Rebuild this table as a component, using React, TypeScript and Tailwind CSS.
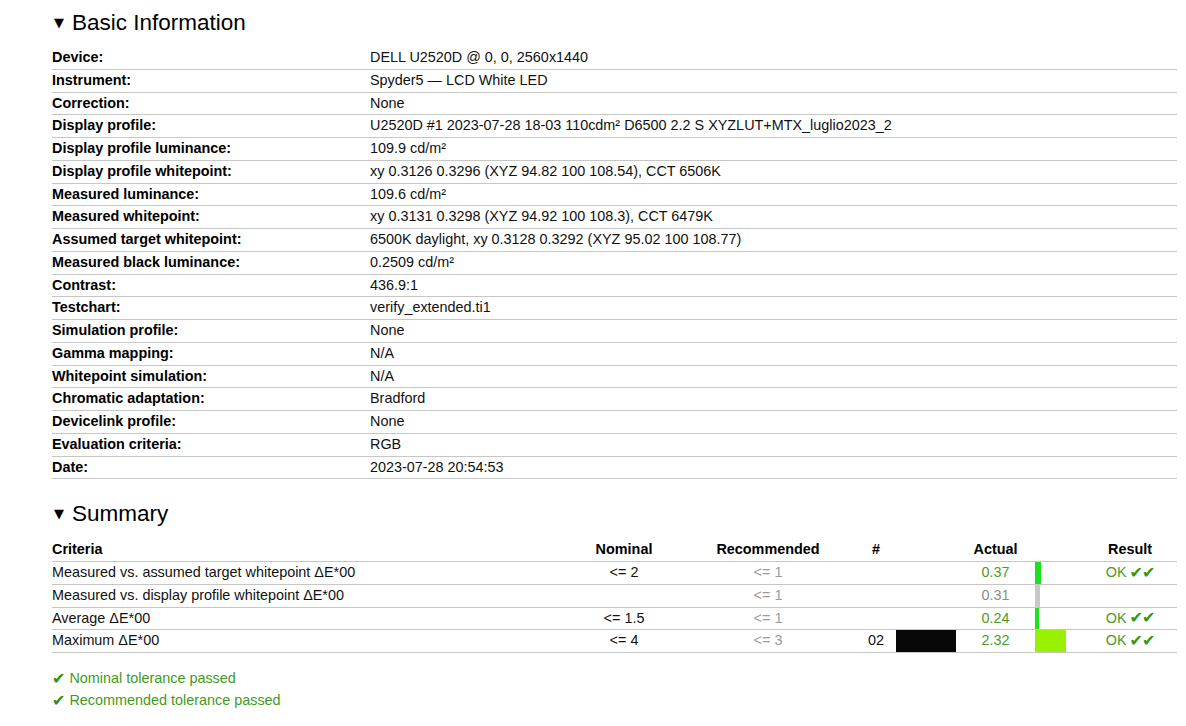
const basicInfo: [string, string][] = [
  ["Device:", "DELL U2520D @ 0, 0, 2560x1440"],
  ["Instrument:", "Spyder5 — LCD White LED"],
  ["Correction:", "None"],
  ["Display profile:", "U2520D #1 2023-07-28 18-03 110cdm² D6500 2.2 S XYZLUT+MTX_luglio2023_2"],
  ["Display profile luminance:", "109.9 cd/m²"],
  ["Display profile whitepoint:", "xy 0.3126 0.3296 (XYZ 94.82 100 108.54), CCT 6506K"],
  ["Measured luminance:", "109.6 cd/m²"],
  ["Measured whitepoint:", "xy 0.3131 0.3298 (XYZ 94.92 100 108.3), CCT 6479K"],
  ["Assumed target whitepoint:", "6500K daylight, xy 0.3128 0.3292 (XYZ 95.02 100 108.77)"],
  ["Measured black luminance:", "0.2509 cd/m²"],
  ["Contrast:", "436.9:1"],
  ["Testchart:", "verify_extended.ti1"],
  ["Simulation profile:", "None"],
  ["Gamma mapping:", "N/A"],
  ["Whitepoint simulation:", "N/A"],
  ["Chromatic adaptation:", "Bradford"],
  ["Devicelink profile:", "None"],
  ["Evaluation criteria:", "RGB"],
  ["Date:", "2023-07-28 20:54:53"]
];

type SummaryRow = {
  criteria: string;
  nominal: string;
  recommended: string;
  num: string;
  swatch: boolean;
  actual: string;
  pass: boolean;
  barWidth: number;
  barColor: string;
};

const summary: SummaryRow[] = [
  { criteria: "Measured vs. assumed target whitepoint ΔE*00", nominal: "<= 2", recommended: "<= 1", num: "", swatch: false, actual: "0.37", pass: true, barWidth: 6, barColor: "#1fe01f" },
  { criteria: "Measured vs. display profile whitepoint ΔE*00", nominal: "", recommended: "<= 1", num: "", swatch: false, actual: "0.31", pass: false, barWidth: 5, barColor: "#c8c8c8" },
  { criteria: "Average ΔE*00", nominal: "<= 1.5", recommended: "<= 1", num: "", swatch: false, actual: "0.24", pass: true, barWidth: 4, barColor: "#1fe01f" },
  { criteria: "Maximum ΔE*00", nominal: "<= 4", recommended: "<= 3", num: "02", swatch: true, actual: "2.32", pass: true, barWidth: 31, barColor: "#99f000" }
];

const grid = "grid grid-cols-[516px_112px_176px_40px_60px_79px_48px_94px]";
const dejavu = { fontFamily: '"DejaVu Sans", sans-serif' };

function Heading({ title }: { title: string }) {
  return (
    <h2 className="flex h-[28px] items-center text-[22.5px] leading-[28px] text-black">
      <span className="ml-[2px] mr-[8px] text-[13px]" style={dejavu}>▼</span>
      {title}
    </h2>
  );
}

export default function App() {
  return (
    <div className="min-h-screen bg-white pl-[52px] pr-[9px] pt-[9px] text-[14.4px] text-[#111]" style={{ fontFamily: '"Liberation Sans", Arial, sans-serif' }}>
      <Heading title="Basic Information" />

      <div className="mt-[10px] w-[1125px]">
        {basicInfo.map(([label, value]) => (
          <div key={label} className="grid h-[22.75px] grid-cols-[318px_1fr] items-center border-b border-[#c6c6c6]">
            <span className="font-bold text-black">{label}</span>
            <span>{value}</span>
          </div>
        ))}
      </div>

      <div className="mt-[21px]">
        <Heading title="Summary" />
      </div>

      <div className="mt-[11px] w-[1125px]">
        <div className={`${grid} h-[22.75px] items-center border-b border-[#c6c6c6] font-bold text-black`}>
          <span>Criteria</span>
          <span className="text-center">Nominal</span>
          <span className="text-center">Recommended</span>
          <span className="text-center">#</span>
          <span />
          <span className="text-center">Actual</span>
          <span />
          <span className="text-center">Result</span>
        </div>
        {summary.map((row) => (
          <div key={row.criteria} className={`${grid} h-[22.75px] items-stretch border-b border-[#c6c6c6]`}>
            <span className="flex items-center">{row.criteria}</span>
            <span className="flex items-center justify-center">{row.nominal}</span>
            <span className="flex items-center justify-center text-[#9a9a9a]">{row.recommended}</span>
            <span className="flex items-center justify-center">{row.num}</span>
            <span className="flex items-stretch">
              {row.swatch && <span className="w-full bg-[#080808]" />}
            </span>
            <span className={`flex items-center justify-center ${row.pass ? "text-[#4f9a22]" : "text-[#8c8c8c]"}`}>
              {row.actual}
            </span>
            <span className="flex items-stretch">
              <span style={{ width: row.barWidth, backgroundColor: row.barColor }} />
            </span>
            <span className="flex items-center justify-center text-[#4f9a22]">
              {row.pass && (
                <>
                  OK <span className="ml-[3px] text-[16px] leading-none tracking-[-1px] text-[#2f9a12]" style={dejavu}>✔✔</span>
                </>
              )}
            </span>
          </div>
        ))}
      </div>

      <div className="mt-[15px] text-[#3f9a1c]">
        <p className="flex h-[22px] items-center">
          <span className="mr-[4px] text-[16px] leading-none text-[#2f8f12]" style={dejavu}>✔</span>Nominal tolerance passed
        </p>
        <p className="flex h-[22px] items-center">
          <span className="mr-[4px] text-[16px] leading-none text-[#2f8f12]" style={dejavu}>✔</span>Recommended tolerance passed
        </p>
      </div>
    </div>
  );
}
